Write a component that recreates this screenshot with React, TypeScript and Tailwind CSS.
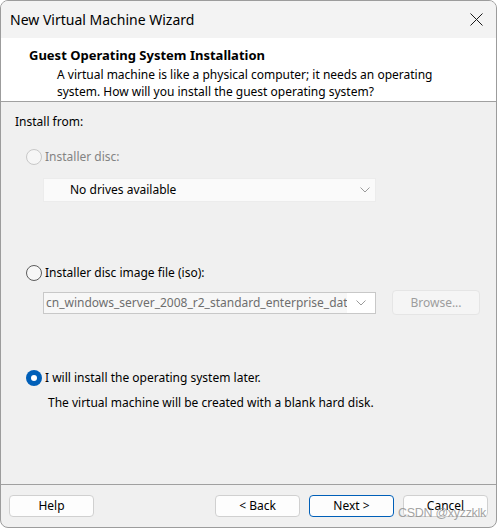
import React from "react";

const font = { fontFamily: '"Noto Sans", "Open Sans", sans-serif' };

function Radio({ state }: { state: "disabled" | "off" | "on" }) {
  if (state === "on") {
    return (
      <span className="flex h-[16px] w-[16px] items-center justify-center rounded-full bg-[#005fb8]">
        <span className="h-[6px] w-[6px] rounded-full bg-white" />
      </span>
    );
  }
  return (
    <span
      className={`h-[16px] w-[16px] rounded-full border ${
        state === "disabled"
          ? "border-[#c8c8c8] bg-[#f6f6f6]"
          : "border-[#5c5c5c] bg-[#f7f7f7]"
      }`}
    />
  );
}

function Chevron() {
  return (
    <svg width="10" height="6" viewBox="0 0 10 6" className="shrink-0">
      <polyline
        points="0.5,0.5 5,5 9.5,0.5"
        fill="none"
        stroke="#9a9a9a"
        strokeWidth="1"
      />
    </svg>
  );
}

function Button({
  label,
  primary = false,
}: {
  label: string;
  primary?: boolean;
}) {
  return (
    <button
      type="button"
      className={`flex h-[22px] w-[85px] items-center justify-center rounded-[4px] border bg-[#fdfdfd] text-[12px] text-black ${
        primary ? "border-[#005fb8]" : "border-[#d0d0d0]"
      }`}
    >
      {label}
    </button>
  );
}

export default function App() {
  return (
    <div className="h-[528px] w-[499px] bg-white" style={font}>
      <div className="relative flex h-[528px] w-[497px] flex-col overflow-hidden rounded-[8px] border border-[#9c9c9c] bg-[#f0f0f0]">
        {/* title bar */}
        <div className="flex h-[37px] shrink-0 items-center justify-between bg-[#f3f3f3] pl-[9px] pr-[13px]">
          <span className="text-[14px] text-black">
            New Virtual Machine Wizard
          </span>
          <svg width="13" height="13" viewBox="0 0 13 13">
            <path
              d="M0.5 0.5 L12.5 12.5 M12.5 0.5 L0.5 12.5"
              stroke="#1a1a1a"
              strokeWidth="1"
            />
          </svg>
        </div>

        {/* header */}
        <div className="h-[64px] shrink-0 border-b border-[#a0a0a0] bg-white pl-[28px] pt-[9px]">
          <div className="text-[13px] font-bold leading-[16px] text-black">
            Guest Operating System Installation
          </div>
          <div className="mt-[3px] pl-[28px] text-[12px] leading-[17px] text-black">
            A virtual machine is like a physical computer; it needs an
            operating
            <br />
            system. How will you install the guest operating system?
          </div>
        </div>

        {/* body */}
        <div className="flex flex-1 flex-col px-[14px] pt-[12px] text-[12px] leading-[16px]">
          <div className="text-black">Install from:</div>

          <div className="ml-[11px] mt-[19px] flex h-[16px] items-center gap-[3px]">
            <Radio state="disabled" />
            <span className="text-[#838383]">Installer disc:</span>
          </div>
          <div className="ml-[28px] mt-[13px] flex h-[24px] w-[333px] items-center justify-between border border-[#ececec] bg-[#fafafa] pl-[26px] pr-[5px]">
            <span className="text-black">No drives available</span>
            <Chevron />
          </div>

          <div className="ml-[11px] mt-[63px] flex h-[16px] items-center gap-[3px]">
            <Radio state="off" />
            <span className="text-black">Installer disc image file (iso):</span>
          </div>
          <div className="ml-[28px] mt-[9px] flex h-[25px] items-center gap-[16px]">
            <div className="flex h-[22px] w-[333px] items-center border border-[#c8c8c8] bg-white">
              <span className="w-[303px] overflow-hidden whitespace-nowrap bg-[#f7f7f7] pl-[2px] leading-[20px] text-[#6e6e6e]">
                cn_windows_server_2008_r2_standard_enterprise_datacenter
              </span>
              <span className="flex flex-1 justify-center">
                <Chevron />
              </span>
            </div>
            <div className="flex h-[25px] w-[88px] items-center justify-center rounded-[4px] border border-[#e5e5e5] bg-[#f5f5f5] text-[#9d9d9d]">
              Browse...
            </div>
          </div>

          <div className="ml-[11px] mt-[55px] flex h-[16px] items-center gap-[3px]">
            <Radio state="on" />
            <span className="text-black">
              I will install the operating system later.
            </span>
          </div>
          <div className="ml-[33px] mt-[9px] text-black">
            The virtual machine will be created with a blank hard disk.
          </div>
        </div>

        {/* footer */}
        <div className="flex h-[43px] shrink-0 items-start border-t border-[#a0a0a0] pl-[8px] pr-[8px] pt-[10px]">
          <Button label="Help" />
          <div className="flex-1" />
          <div className="flex gap-[9px]">
            <Button label="< Back" />
            <Button label="Next >" primary />
            <Button label="Cancel" />
          </div>
        </div>

        <span
          className="pointer-events-none absolute left-[397px] top-[503px] whitespace-nowrap text-[12.5px] tracking-[-0.3px] text-[#8c8c8c]/80"
          style={{ fontFamily: '"Liberation Sans", Arial, sans-serif' }}
        >
          CSDN @xyzzklk
        </span>
      </div>
    </div>
  );
}
